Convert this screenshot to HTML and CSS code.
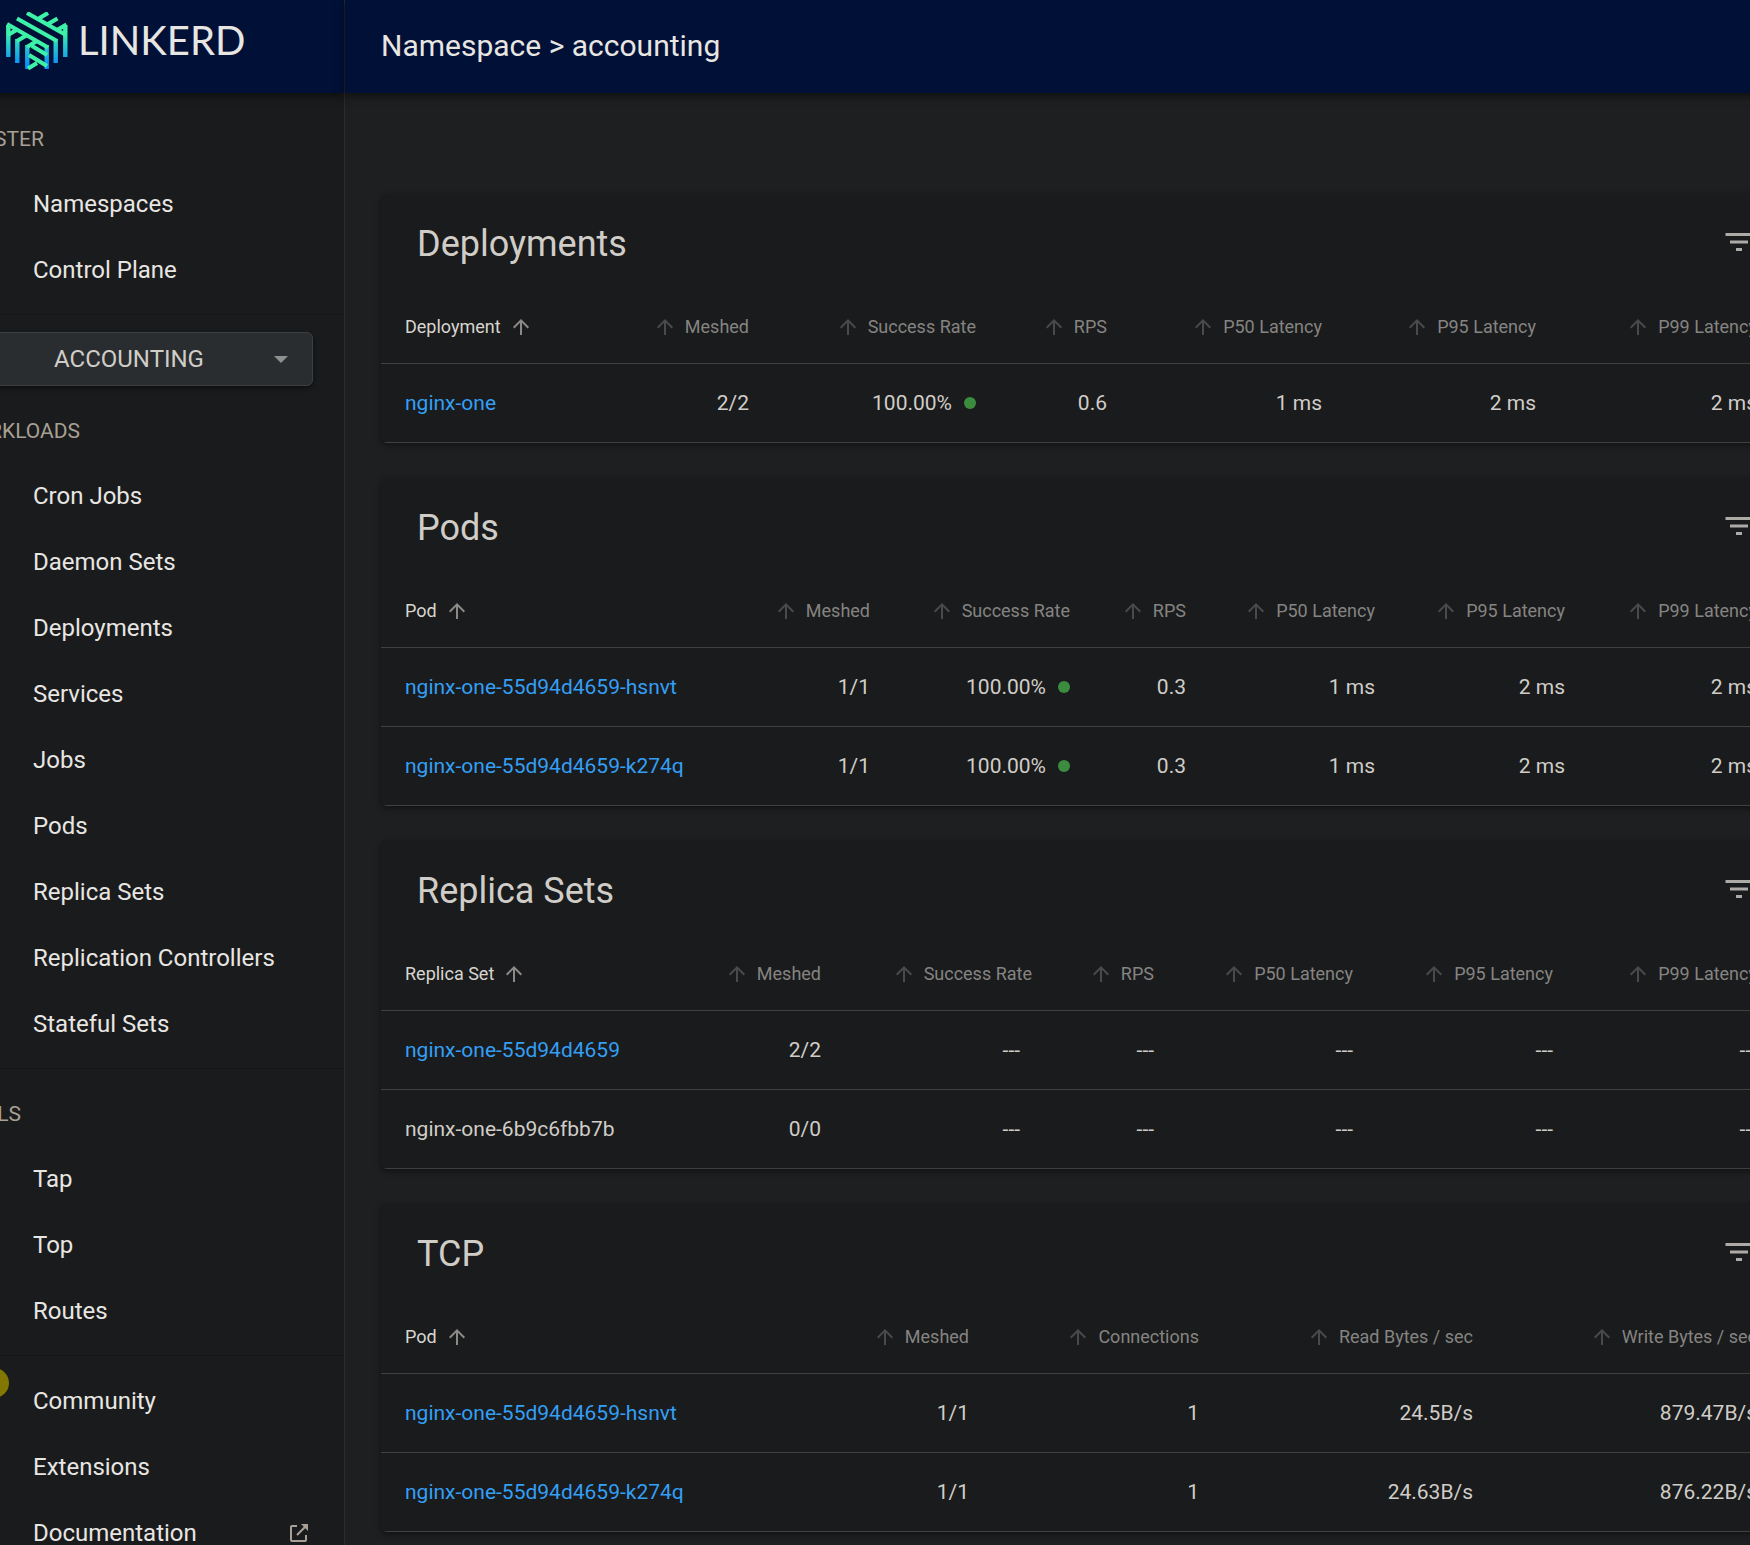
FILE: index.html
```html
<!DOCTYPE html>
<html lang="en">
<head>
<meta charset="utf-8">
<title>Linkerd - Namespace accounting</title>
<link rel="stylesheet" href="styles.css">
</head>
<body>
<svg class="sprite" aria-hidden="true">
  <defs>
    <symbol id="arrow-up" viewBox="0 0 24 24"><path d="M4 12l1.41 1.41L11 7.83V20h2V7.83l5.58 5.59L20 12l-8-8-8 8z"/></symbol>
    <symbol id="filter" viewBox="0 0 24 24"><path d="M10 18h4v-2h-4v2zM3 6v2h18V6H3zm3 7h12v-2H6v2z"/></symbol>
  </defs>
</svg>
<div class="app">
  <aside class="sidebar">
    <a class="brand" href="#">
      <svg class="brand-mark" viewBox="0 0 62 58" aria-hidden="true">
        <defs>
          <linearGradient id="fall" gradientUnits="userSpaceOnUse" x1="0" y1="20" x2="0" y2="54">
            <stop offset="0" stop-color="#3df2a8"/><stop offset="1" stop-color="#0a8cff"/>
          </linearGradient>
        </defs>
        <g fill="none" stroke="url(#fall)" stroke-width="4.4">
          <path d="M2.3 13V45M59.3 13V45M11.3 27V51M49.7 27V51M21.3 33V57M40.7 33V57"/>
        </g>
        <g fill="none" stroke="#3df2a8" stroke-width="4.2">
          <path d="M1 12L42 35.500M11 6.500L51 29M21 1L60 23M42 1L32 7M51.500 6.500L42 12M60.500 12.500L51 18M2 23L12 17M11 29L21 23M21 35L31 29M26 34L41 43M23 43L41 54M22 56.500L31 51"/>
        </g>
      </svg>
      <span class="brand-name">LINKERD</span>
    </a>
    <nav>
      <ul class="menu">
        <li class="menu-label">CLUSTER</li>
        <li><a href="#">Namespaces</a></li>
        <li><a href="#">Control Plane</a></li>
      </ul>
      <div class="namespace-picker">
        <select aria-label="Namespace"><option>ACCOUNTING</option></select>
        <svg class="caret" viewBox="0 0 14 7" aria-hidden="true"><path d="M0 0h14L7 7z"/></svg>
      </div>
      <ul class="menu">
        <li class="menu-label">WORKLOADS</li>
        <li><a href="#">Cron Jobs</a></li>
        <li><a href="#">Daemon Sets</a></li>
        <li><a href="#">Deployments</a></li>
        <li><a href="#">Services</a></li>
        <li><a href="#">Jobs</a></li>
        <li><a href="#">Pods</a></li>
        <li><a href="#">Replica Sets</a></li>
        <li><a href="#">Replication Controllers</a></li>
        <li><a href="#">Stateful Sets</a></li>
      </ul>
      <ul class="menu">
        <li class="menu-label">TOOLS</li>
        <li><a href="#">Tap</a></li>
        <li><a href="#">Top</a></li>
        <li><a href="#">Routes</a></li>
      </ul>
      <ul class="menu">
        <li><a href="#">Community<span class="badge"></span></a></li>
        <li><a href="#">Extensions</a></li>
        <li><a href="#">Documentation
          <svg class="external" viewBox="0 0 20 20" aria-hidden="true"><path fill="none" stroke="currentColor" stroke-width="2" d="M8 3H3Q2 3 2 4V17Q2 18 3 18H16Q17 18 17 17V12M8 12L17 3"/><path fill="currentColor" d="M12 1h7v7z"/></svg></a></li>
      </ul>
    </nav>
  </aside>
  <div class="content">
    <header class="topbar"><h1>Namespace &gt; accounting</h1></header>
    <main>
      <section class="card">
        <div class="card-head"><h2>Deployments</h2><button class="filter" aria-label="Filter deployments"><svg><use href="#filter"/></svg></button></div>
        <table class="deployments">
          <colgroup><col><col class="meshed"><col class="rate"><col class="rps"><col class="p50"><col class="p95"><col class="p99"></colgroup>
          <thead><tr>
            <th><button class="active">Deployment<svg><use href="#arrow-up"/></svg></button></th>
            <th><button><svg><use href="#arrow-up"/></svg>Meshed</button></th>
            <th><button><svg><use href="#arrow-up"/></svg>Success Rate</button></th>
            <th><button><svg><use href="#arrow-up"/></svg>RPS</button></th>
            <th><button><svg><use href="#arrow-up"/></svg>P50 Latency</button></th>
            <th><button><svg><use href="#arrow-up"/></svg>P95 Latency</button></th>
            <th><button><svg><use href="#arrow-up"/></svg>P99 Latency</button></th>
          </tr></thead>
          <tbody>
            <tr><td><a href="#">nginx-one</a></td><td>2/2</td><td><span class="success">100.00%</span></td><td>0.6</td><td>1 ms</td><td>2 ms</td><td>2 ms</td></tr>
          </tbody>
        </table>
      </section>
      <section class="card">
        <div class="card-head"><h2>Pods</h2><button class="filter" aria-label="Filter pods"><svg><use href="#filter"/></svg></button></div>
        <table class="pods">
          <colgroup><col><col class="meshed"><col class="rate"><col class="rps"><col class="p50"><col class="p95"><col class="p99"></colgroup>
          <thead><tr>
            <th><button class="active">Pod<svg><use href="#arrow-up"/></svg></button></th>
            <th><button><svg><use href="#arrow-up"/></svg>Meshed</button></th>
            <th><button><svg><use href="#arrow-up"/></svg>Success Rate</button></th>
            <th><button><svg><use href="#arrow-up"/></svg>RPS</button></th>
            <th><button><svg><use href="#arrow-up"/></svg>P50 Latency</button></th>
            <th><button><svg><use href="#arrow-up"/></svg>P95 Latency</button></th>
            <th><button><svg><use href="#arrow-up"/></svg>P99 Latency</button></th>
          </tr></thead>
          <tbody>
            <tr><td><a href="#">nginx-one-55d94d4659-hsnvt</a></td><td>1/1</td><td><span class="success">100.00%</span></td><td>0.3</td><td>1 ms</td><td>2 ms</td><td>2 ms</td></tr>
            <tr><td><a href="#">nginx-one-55d94d4659-k274q</a></td><td>1/1</td><td><span class="success">100.00%</span></td><td>0.3</td><td>1 ms</td><td>2 ms</td><td>2 ms</td></tr>
          </tbody>
        </table>
      </section>
      <section class="card">
        <div class="card-head"><h2>Replica Sets</h2><button class="filter" aria-label="Filter replica sets"><svg><use href="#filter"/></svg></button></div>
        <table class="replica-sets">
          <colgroup><col><col class="meshed"><col class="rate"><col class="rps"><col class="p50"><col class="p95"><col class="p99"></colgroup>
          <thead><tr>
            <th><button class="active">Replica Set<svg><use href="#arrow-up"/></svg></button></th>
            <th><button><svg><use href="#arrow-up"/></svg>Meshed</button></th>
            <th><button><svg><use href="#arrow-up"/></svg>Success Rate</button></th>
            <th><button><svg><use href="#arrow-up"/></svg>RPS</button></th>
            <th><button><svg><use href="#arrow-up"/></svg>P50 Latency</button></th>
            <th><button><svg><use href="#arrow-up"/></svg>P95 Latency</button></th>
            <th><button><svg><use href="#arrow-up"/></svg>P99 Latency</button></th>
          </tr></thead>
          <tbody>
            <tr><td><a href="#">nginx-one-55d94d4659</a></td><td>2/2</td><td><span class="no-success">---</span></td><td>---</td><td>---</td><td>---</td><td>---</td></tr>
            <tr><td>nginx-one-6b9c6fbb7b</td><td>0/0</td><td><span class="no-success">---</span></td><td>---</td><td>---</td><td>---</td><td>---</td></tr>
          </tbody>
        </table>
      </section>
      <section class="card">
        <div class="card-head"><h2>TCP</h2><button class="filter" aria-label="Filter TCP"><svg><use href="#filter"/></svg></button></div>
        <table class="tcp">
          <colgroup><col><col class="meshed"><col class="connections"><col class="read"><col class="write"></colgroup>
          <thead><tr>
            <th><button class="active">Pod<svg><use href="#arrow-up"/></svg></button></th>
            <th><button><svg><use href="#arrow-up"/></svg>Meshed</button></th>
            <th><button><svg><use href="#arrow-up"/></svg>Connections</button></th>
            <th><button><svg><use href="#arrow-up"/></svg>Read Bytes / sec</button></th>
            <th><button><svg><use href="#arrow-up"/></svg>Write Bytes / sec</button></th>
          </tr></thead>
          <tbody>
            <tr><td><a href="#">nginx-one-55d94d4659-hsnvt</a></td><td>1/1</td><td>1</td><td>24.5B/s</td><td>879.47B/s</td></tr>
            <tr><td><a href="#">nginx-one-55d94d4659-k274q</a></td><td>1/1</td><td>1</td><td>24.63B/s</td><td>876.22B/s</td></tr>
          </tbody>
        </table>
      </section>
    </main>
  </div>
</div>
</body>
</html>
```
FILE: styles.css
```css
* { box-sizing: border-box; }

html { height: 100%; }

body {
  height: 100vh;
  margin: 0;
  overflow: hidden;
  background: #1e1f20;
  color: #e8e6e3;
  font-family: Roboto, "Liberation Sans", sans-serif;
  font-size: 24px;
}

a { color: inherit; text-decoration: none; }

button {
  border: 0;
  padding: 0;
  background: none;
  color: inherit;
  font: inherit;
}

h1, h2, ul { margin: 0; padding: 0; font-weight: 400; }

.sprite { display: none; }

/* The shell is wider than the window on both sides. */
.app {
  display: flex;
  width: calc(100% + 133px);
  min-height: 100vh;
  margin-left: -66px;
}

.sidebar {
  flex: 0 0 411px;
  background: #1a1b1c;
  border-right: 1px solid #2b2c2c;
}

.brand {
  display: flex;
  gap: 10px;
  height: 93px;
  padding: 12px 0 0 72px;
  background: #001036;
  box-shadow: 0 3px 8px rgba(0, 0, 0, .5);
}

.brand-mark { width: 62px; height: 58px; }

.brand-name {
  font-family: Lato, sans-serif;
  font-size: 40px;
  line-height: 56px;
}

nav { padding-top: 1px; }

.menu { padding: 12px 0 11px; list-style: none; }
.menu + .menu { border-top: 1px solid #151617; }

.menu-label,
.menu a {
  display: flex;
  align-items: center;
  height: 66px;
  padding-left: 99px;
}

.menu-label {
  height: 65px;
  padding-left: 22px;
  color: #a8a095;
  font-size: 21px;
}

.menu a { position: relative; }

.badge {
  position: absolute;
  top: 0;
  left: 45px;
  width: 30px;
  height: 30px;
  border-radius: 50%;
  background: #827700;
}

.external {
  width: 20px;
  height: 20px;
  margin: 0 35px 0 auto;
  color: #a8a095;
}

.namespace-picker {
  position: relative;
  padding: 17px 31px 0 24px;
  border-top: 1px solid #151617;
}

.namespace-picker select {
  width: 100%;
  height: 54px;
  padding: 0 0 0 95px;
  appearance: none;
  border: 1px solid #3c4042;
  border-radius: 6px;
  background: #2a2d2f;
  box-shadow: 0 2px 5px rgba(0, 0, 0, .5);
  color: #d0cdc8;
  font: inherit;
}

.caret {
  position: absolute;
  top: 41px;
  right: 56px;
  width: 14px;
  height: 7px;
  fill: #909090;
}

.content { flex: 1; min-width: 0; }

.topbar {
  display: flex;
  align-items: center;
  height: 93px;
  padding: 0 36px 2px;
  background: #001036;
  box-shadow: 0 3px 8px rgba(0, 0, 0, .5);
}

.topbar h1 { font-size: 30px; }

main {
  display: flex;
  flex-direction: column;
  gap: 35px;
  padding: 101px 36px 36px;
}

.card {
  overflow: hidden;
  border-radius: 6px;
  background: #1a1b1c;
  box-shadow: 0 2px 6px rgba(0, 0, 0, .45);
  color: #d0cdc8;
}

.card-head {
  display: flex;
  align-items: center;
  justify-content: space-between;
  height: 96px;
  padding: 0 24px 0 36px;
}

.card-head h2 { padding-top: 4px; font-size: 36px; }
.filter { display: flex; color: #aeaba6; }
.filter svg { width: 36px; height: 36px; fill: currentColor; }

table {
  width: 100%;
  table-layout: fixed;
  border-collapse: separate;
  border-spacing: 0;
  font-size: 21px;
}

th, td {
  height: 79px;
  padding: 0 24px;
  border-bottom: 1px solid #3f4040;
  text-align: right;
  white-space: nowrap;
}

th {
  height: 74px;
  color: #858482;
  font-size: 18px;
  font-weight: 400;
}

th:first-child, td:first-child { text-align: left; }
td a { color: #349ff4; }

th button { display: flex; align-items: center; gap: 8px; margin-left: auto; }
th svg { width: 24px; height: 24px; fill: #4a4a4a; }
th .active { margin-left: 0; color: #d8d5d0; }
th .active svg { fill: #8c8a87; }

.success { display: inline-flex; align-items: center; gap: 12px; }
.success::after {
  content: "";
  width: 12px;
  height: 12px;
  border-radius: 50%;
  background: #3c8c40;
}

.no-success { padding-right: 12px; }

.meshed { width: 150px; }

.deployments .rate { width: 227px; }
.deployments .rps { width: 131px; }
.deployments .p50 { width: 215px; }
.deployments .p95 { width: 214px; }
.deployments .p99 { width: 221px; }

.pods .rate { width: 200px; }
.pods .rps { width: 116px; }
.pods .p50 { width: 189px; }
.pods .p95 { width: 190px; }
.pods .p99 { width: 192px; }

.replica-sets .rate { width: 211px; }
.replica-sets .rps { width: 122px; }
.replica-sets .p50 { width: 199px; }
.replica-sets .p95 { width: 200px; }
.replica-sets .p99 { width: 204px; }

.tcp .connections { width: 230px; }
.tcp .read { width: 274px; }
.tcp .write { width: 284px; }
```
